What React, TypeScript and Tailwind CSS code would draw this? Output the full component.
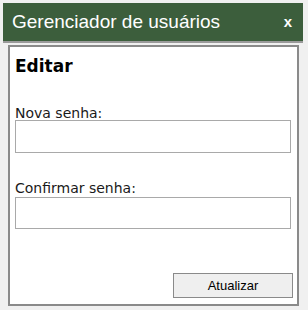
export default function App() {
  return (
    <div className="w-[308px] h-[310px] bg-[#f0f0f0] pt-[3px] pl-[3px] pr-[5px] flex flex-col">
      {/* Header */}
      <div className="h-[38px] bg-[#3c5e3c] flex items-center justify-between pl-[9px] pr-[11px] shrink-0">
        <span className="text-white text-[19px] leading-[22px] font-['Liberation_Sans',Arial,sans-serif]">Gerenciador de usuários</span>
        <span className="text-white text-[15px] font-bold font-['Liberation_Sans',Arial,sans-serif]">x</span>
      </div>
      <div className="h-[2px] bg-[#9a9a9a] shrink-0" />

      {/* Body */}
      <div className="flex-1 pt-[2px] pl-[5px] pr-[4px] pb-[4px]">
        <div className="h-full border-2 border-[#8a8a8a] bg-white flex flex-col pl-[5px] pr-[6px] font-['DejaVu_Sans',Verdana,sans-serif]">
          <h2 className="text-[17px] font-bold text-black mt-[8px] leading-[22px]">Editar</h2>

          <label className="text-[14px] text-[#1a1a1a] mt-[29px] leading-[14px]">Nova senha:</label>
          <input type="password" className="mt-0 h-[33px] w-full border border-[#a9a9a9] bg-white outline-none" />

          <label className="text-[14px] text-[#1a1a1a] mt-[28px] leading-[14px]">Confirmar senha:</label>
          <input type="password" className="mt-[2px] h-[32px] w-full border border-[#a9a9a9] bg-white outline-none" />

          <div className="flex-1" />
          <div className="flex justify-end pb-[6px] -mr-[2px]">
            <button className="w-[120px] h-[25px] bg-[#efefef] border border-[#8a8a8a] text-[13px] text-black font-['Liberation_Sans',Arial,sans-serif]">
              Atualizar
            </button>
          </div>
        </div>
      </div>
    </div>
  )
}
